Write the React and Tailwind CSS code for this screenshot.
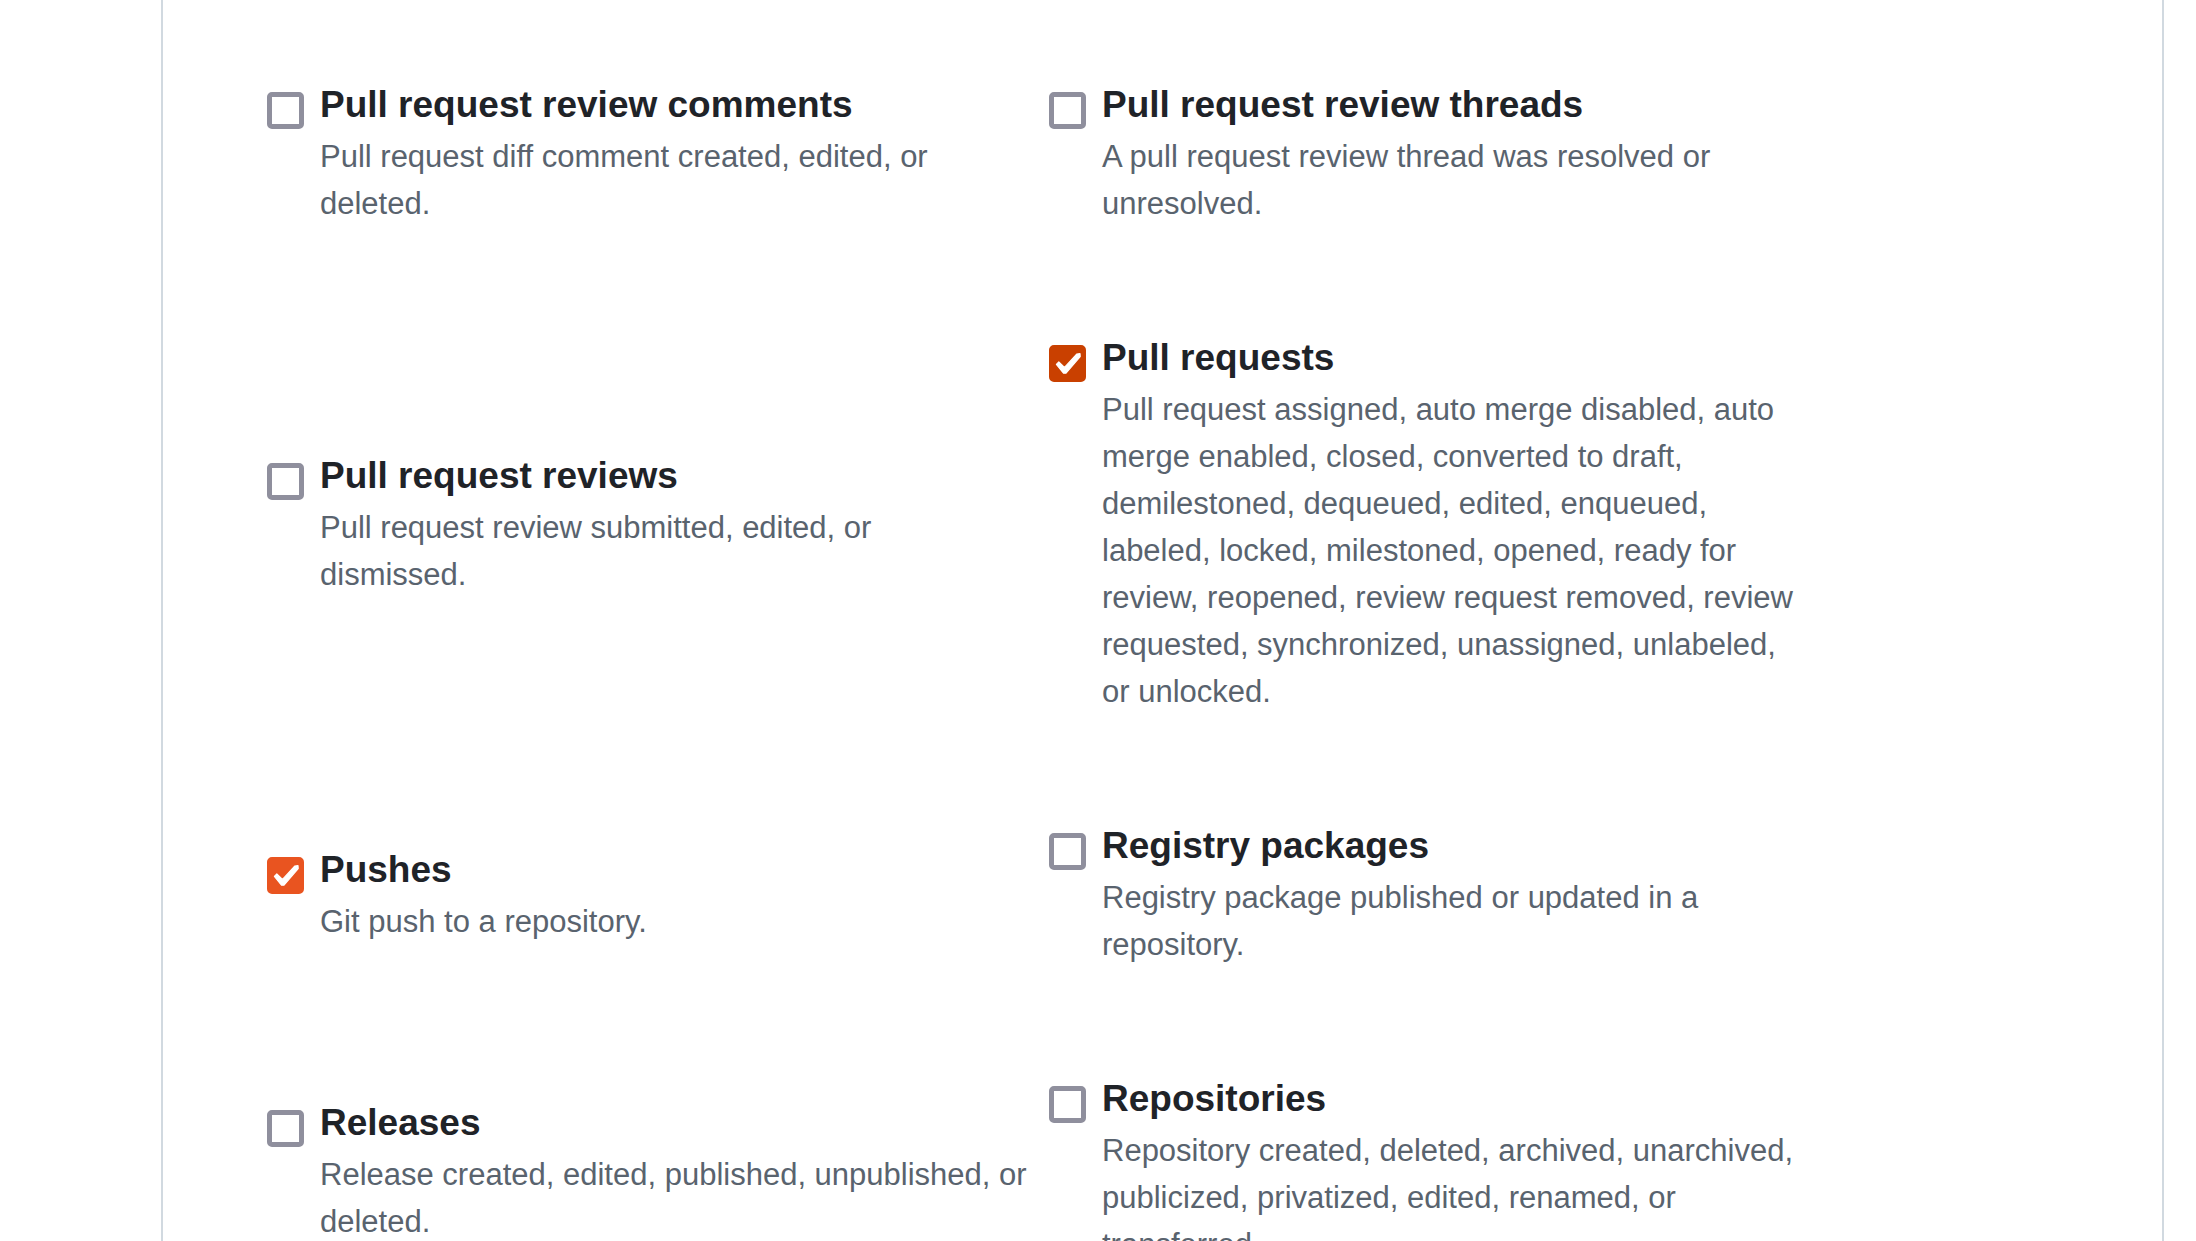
const events = [
  { id: "review-comments", title: "Pull request review comments", text: "Pull request diff comment created, edited, or deleted." },
  { id: "review-threads", title: "Pull request review threads", text: "A pull request review thread was resolved or unresolved." },
  { id: "reviews", title: "Pull request reviews", text: "Pull request review submitted, edited, or\ndismissed." },
  {
    id: "pull-requests",
    title: "Pull requests",
    text: "Pull request assigned, auto merge disabled, auto merge enabled, closed, converted to draft, demilestoned, dequeued, edited, enqueued, labeled, locked, milestoned, opened, ready for review, reopened, review request removed, review requested, synchronized, unassigned, unlabeled, or unlocked.",
    checked: true,
    tone: "checked:border-[#c94000] checked:bg-[#c94000]",
  },
  {
    id: "pushes",
    title: "Pushes",
    text: "Git push to a repository.",
    checked: true,
  },
  { id: "registry-packages", title: "Registry packages", text: "Registry package published or updated in a repository." },
  { id: "releases", title: "Releases", text: "Release created, edited, published, unpublished, or deleted." },
  { id: "repositories", title: "Repositories", text: "Repository created, deleted, archived, unarchived, publicized, privatized, edited, renamed, or transferred." },
];

const defaultTone = "checked:border-[#e95420] checked:bg-[#e95420]";

function EventOption({ id, title, text, checked = false, tone = defaultTone }) {
  return (
    <div className="flex gap-4 pr-[21px]">
      <span className="mt-[15px] grid size-[37px] shrink-0">
        <input
          id={id}
          type="checkbox"
          defaultChecked={checked}
          aria-describedby={id + "-note"}
          className={"peer col-start-1 row-start-1 size-full appearance-none rounded-[5px] border-5 border-[#8f8f9d] bg-white " + tone}
        />
        <svg
          viewBox="0 0 37 37"
          aria-hidden="true"
          className="pointer-events-none invisible col-start-1 row-start-1 size-full peer-checked:visible"
        >
          <path
            d="M7.4 19.4 9.8 17 15.5 22.4 27.9 9 31 8.6 31.2 11.6 17 28.2 14.5 28.2Z"
            fill="#fff"
            stroke="#fff"
            strokeWidth="1.2"
            strokeLinejoin="round"
          />
        </svg>
      </span>
      <div className="min-w-0 flex-1">
        <label htmlFor={id} className="block text-[37px] leading-[56px] font-bold text-[#1f2328]">
          {title}
        </label>
        <p id={id + "-note"} className="text-[31px] leading-[47px] whitespace-pre-line text-[#59636e]">
          {text}
        </p>
      </div>
    </div>
  );
}

export default function App() {
  return (
    <main className="h-screen overflow-hidden bg-white pr-8 pl-[161px] font-['Liberation_Sans',Arial,sans-serif]">
      <form className="min-h-full border-x-2 border-[#d1d9e0] pt-[77px] pr-[331px] pl-[104px]">
        <div className="grid grid-cols-2 items-center gap-y-[103px]">
          {events.map((event) => (
            <EventOption key={event.id} {...event} />
          ))}
        </div>
      </form>
    </main>
  );
}
